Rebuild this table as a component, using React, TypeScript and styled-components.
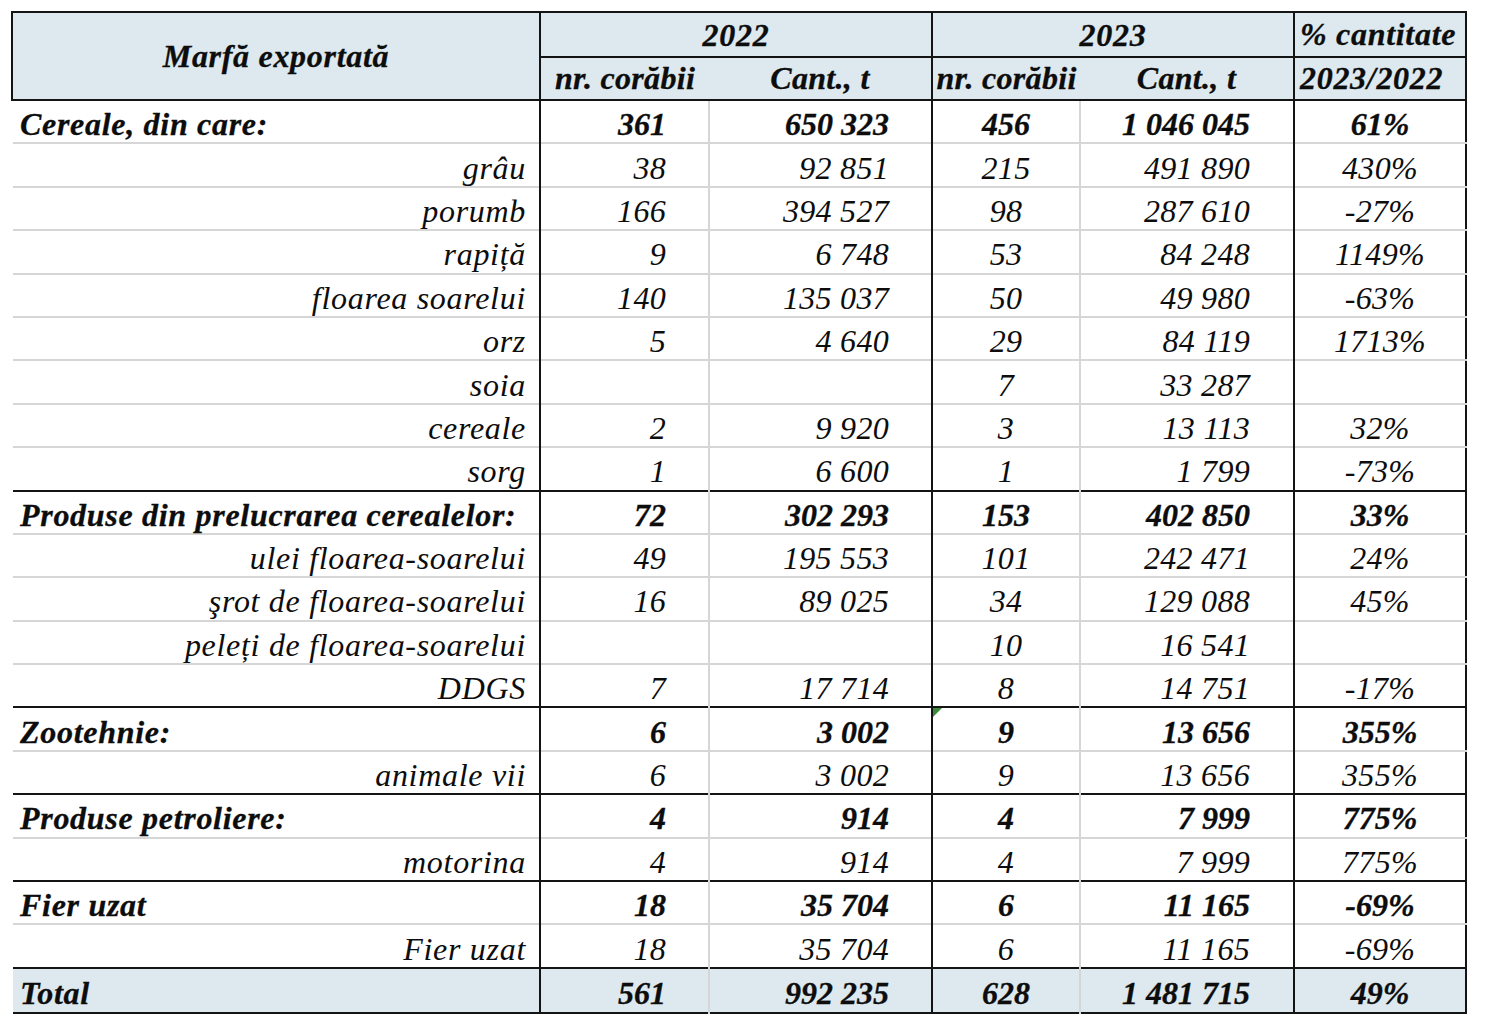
import { FC } from 'react'
import styled, { createGlobalStyle, css } from 'styled-components'

const GlobalStyle = createGlobalStyle`
  html, body {
    margin: 0;
    padding: 0;
    background: #ffffff;
  }
  body {
    font-family: 'Liberation Serif', 'Times New Roman', serif;
    color: #0d0d0d;
  }
`

const SERIF = "'Liberation Serif', 'Times New Roman', serif"
const INK = '#141414'
const GRID = '#d6d6d6'
const HEAD_BG = '#dde9ee'

const Page = styled('div')({
  padding: '11px 0 0 11px',
})

const Table = styled('table')({
  borderCollapse: 'collapse',
  tableLayout: 'fixed',
  width: '1456px',
  border: `2px solid ${INK}`,
  fontFamily: SERIF,
  fontStyle: 'italic',
  fontSize: '32px',
  color: '#0d0d0d',
})

const HeadCell = styled.th<{ $align?: 'left' | 'center' }>`
  background: ${HEAD_BG};
  font-family: ${SERIF};
  font-weight: 700;
  height: 41.5px;
  padding: 0;
  letter-spacing: 0.7px;
  -webkit-text-stroke: 0.3px #0d0d0d;
  text-align: ${p => p.$align ?? 'center'};
  border: 2px solid ${INK};
  line-height: 1;
  white-space: nowrap;
  ${p =>
    p.$align === 'left' &&
    css`
      padding-left: 5px;
    `}
`

const YearCell = styled(HeadCell)`
  padding-top: 1px;
`

const SubHeadCell = styled(HeadCell)<{ $inner?: 'left' | 'right' }>`
  letter-spacing: 0.3px;
  ${p =>
    p.$inner === 'left' &&
    css`
      border-right: none;
    `}
  ${p =>
    p.$inner === 'right' &&
    css`
      border-left: none;
    `}
`

const Row = styled.tr<{ $top?: boolean; $total?: boolean }>`
  height: ${p => (p.$total ? 45 : 43.4)}px;
  background: ${p => (p.$total ? HEAD_BG : 'transparent')};
  & > td {
    border-top: 2px solid ${p => (p.$top ? INK : GRID)};
  }
`

const Cell = styled.td<{
  $align: 'left' | 'right' | 'center'
  $pad: number
  $bold?: boolean
  $label?: boolean
  $edge: 'ink' | 'grid' | 'none'
  $flag?: boolean
}>`
  position: relative;
  padding: 5px ${p => (p.$align === 'right' ? p.$pad : 0)}px 0 ${p => (p.$align === 'left' ? p.$pad : 0)}px;
  text-align: ${p => p.$align};
  font-family: ${SERIF};
  font-weight: ${p => (p.$bold ? 700 : 400)};
  letter-spacing: ${p => (p.$label ? 0.7 : p.$bold ? 0 : 0.3)}px;
  line-height: 1;
  white-space: nowrap;
  border-left: 2px solid ${p => (p.$edge === 'ink' ? INK : p.$edge === 'grid' ? GRID : 'transparent')};
  ${p =>
    p.$bold &&
    css`
      -webkit-text-stroke: 0.3px #0d0d0d;
    `}
  ${p =>
    p.$flag &&
    css`
      &::before {
        content: '';
        position: absolute;
        top: 0;
        left: 0;
        border-top: 9px solid #3c8a3a;
        border-right: 9px solid transparent;
      }
    `}
`

type Line = {
  label: string
  values: [string, string, string, string, string]
  kind: 'group' | 'item' | 'total'
  top?: boolean
}

const lines: Line[] = [
  { label: 'Cereale, din care:', values: ['361', '650 323', '456', '1 046 045', '61%'], kind: 'group', top: true },
  { label: 'grâu', values: ['38', '92 851', '215', '491 890', '430%'], kind: 'item' },
  { label: 'porumb', values: ['166', '394 527', '98', '287 610', '-27%'], kind: 'item' },
  { label: 'rapiță', values: ['9', '6 748', '53', '84 248', '1149%'], kind: 'item' },
  { label: 'floarea soarelui', values: ['140', '135 037', '50', '49 980', '-63%'], kind: 'item' },
  { label: 'orz', values: ['5', '4 640', '29', '84 119', '1713%'], kind: 'item' },
  { label: 'soia', values: ['', '', '7', '33 287', ''], kind: 'item' },
  { label: 'cereale', values: ['2', '9 920', '3', '13 113', '32%'], kind: 'item' },
  { label: 'sorg', values: ['1', '6 600', '1', '1 799', '-73%'], kind: 'item' },
  { label: 'Produse din prelucrarea cerealelor:', values: ['72', '302 293', '153', '402 850', '33%'], kind: 'group', top: true },
  { label: 'ulei floarea-soarelui', values: ['49', '195 553', '101', '242 471', '24%'], kind: 'item' },
  { label: 'şrot de floarea-soarelui', values: ['16', '89 025', '34', '129 088', '45%'], kind: 'item' },
  { label: 'peleți de floarea-soarelui', values: ['', '', '10', '16 541', ''], kind: 'item' },
  { label: 'DDGS', values: ['7', '17 714', '8', '14 751', '-17%'], kind: 'item' },
  { label: 'Zootehnie:', values: ['6', '3 002', '9', '13 656', '355%'], kind: 'group', top: true },
  { label: 'animale vii', values: ['6', '3 002', '9', '13 656', '355%'], kind: 'item' },
  { label: 'Produse petroliere:', values: ['4', '914', '4', '7 999', '775%'], kind: 'group', top: true },
  { label: 'motorina', values: ['4', '914', '4', '7 999', '775%'], kind: 'item' },
  { label: 'Fier uzat', values: ['18', '35 704', '6', '11 165', '-69%'], kind: 'group', top: true },
  { label: 'Fier uzat', values: ['18', '35 704', '6', '11 165', '-69%'], kind: 'item' },
  { label: 'Total', values: ['561', '992 235', '628', '1 481 715', '49%'], kind: 'total', top: true },
]

// value columns: alignment, right padding, left divider
const valueCols: { align: 'right' | 'center'; pad: number; edge: 'ink' | 'grid' }[] = [
  { align: 'right', pad: 42, edge: 'ink' },
  { align: 'right', pad: 42, edge: 'grid' },
  { align: 'center', pad: 0, edge: 'ink' },
  { align: 'right', pad: 43, edge: 'grid' },
  { align: 'center', pad: 0, edge: 'ink' },
]

const widths = [528, 169, 223, 148, 214, 172]

const DataRow: FC<{ line: Line }> = ({ line }) => {
  const strong = line.kind !== 'item'
  return (
    <Row $top={line.top} $total={line.kind === 'total'}>
      <Cell $align={strong ? 'left' : 'right'} $pad={strong ? 7 : 13} $bold={strong} $label $edge="none">
        {line.label}
      </Cell>
      {line.values.map((v, i) => (
        <Cell
          key={i}
          $align={valueCols[i].align}
          $pad={valueCols[i].pad}
          $bold={strong}
          $edge={valueCols[i].edge}
          $flag={line.label === 'Zootehnie:' && i === 2}>
          {v}
        </Cell>
      ))}
    </Row>
  )
}

export default function App() {
  return (
    <Page>
      <GlobalStyle />
      <Table>
        <colgroup>
          {widths.map((w, i) => (
            <col key={i} style={{ width: `${w}px` }} />
          ))}
        </colgroup>
        <thead>
          <tr>
            <HeadCell rowSpan={2}>Marfă exportată</HeadCell>
            <YearCell colSpan={2}>2022</YearCell>
            <YearCell colSpan={2}>2023</YearCell>
            <HeadCell $align="left">% cantitate</HeadCell>
          </tr>
          <tr>
            <SubHeadCell $inner="left">nr. corăbii</SubHeadCell>
            <SubHeadCell $inner="right">Cant., t</SubHeadCell>
            <SubHeadCell $inner="left">nr. corăbii</SubHeadCell>
            <SubHeadCell $inner="right">Cant., t</SubHeadCell>
            <HeadCell $align="left">2023/2022</HeadCell>
          </tr>
        </thead>
        <tbody>
          {lines.map((line, i) => (
            <DataRow key={i} line={line} />
          ))}
        </tbody>
      </Table>
    </Page>
  )
}
